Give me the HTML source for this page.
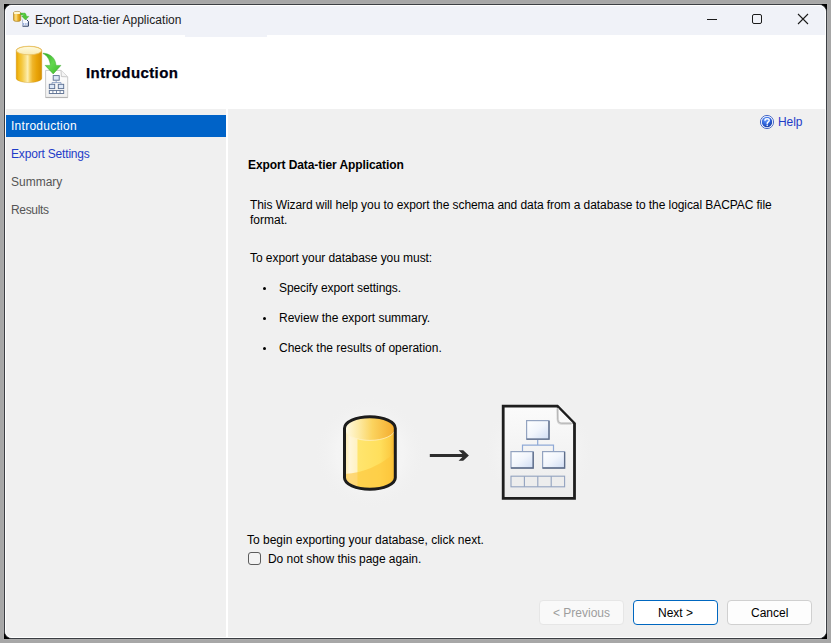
<!DOCTYPE html>
<html><head><meta charset="utf-8">
<style>
html,body{margin:0;padding:0;}
body{width:831px;height:643px;background:#a7a7a7;position:relative;overflow:hidden;font-family:"Liberation Sans",sans-serif;font-size:12px;color:#000;}
.a{position:absolute;}
.t{position:absolute;white-space:nowrap;line-height:14px;font-size:12px;}
#blk{left:4px;top:4px;width:823px;height:635px;background:#000;}
#win{left:4px;top:4px;width:823px;height:635px;box-sizing:border-box;border:1px solid #3b3e43;border-radius:8px;background:#f0f0f0;overflow:hidden;}
#inner{position:absolute;left:0;top:0;right:0;bottom:0;border:1px solid #fff;border-radius:7px;box-sizing:border-box;}
</style></head>
<body>
<div class="a" style="left:3px;top:3px;width:825px;height:637px;box-sizing:border-box;border:1px solid #acacac;"></div>
<div class="a" id="blk"></div>
<div class="a" id="win">
  <!-- coordinates inside #win are offset by 5px (4 + 1 border) -->
  <div class="a" style="left:0;top:0;width:821px;height:30px;background:#f0f2f8;"></div>
  <div class="a" style="left:0;top:30px;width:821px;height:74px;background:#fff;"></div>
  <div class="a" style="left:180px;top:30px;width:82px;height:2px;background:#f0f2f8;"></div>
  <div class="a" style="left:0;top:104px;width:221px;height:529px;background:#f0f0f0;"></div>
  <div class="a" style="left:221px;top:104px;width:2px;height:529px;background:#fff;"></div>
  <div class="a" style="left:223px;top:104px;width:598px;height:529px;background:#f0f0f0;"></div>
  <div class="a" style="left:0;top:110px;width:221px;height:22px;background:#0063c8;"></div>
  <div id="inner"></div>
</div>

<!-- title bar -->
<div class="t" style="left:35px;top:13px;color:#1b1b1b;letter-spacing:0.04px;">Export Data-tier Application</div>
<!-- window controls -->
<svg class="a" style="left:700px;top:8px" width="120" height="22" viewBox="0 0 120 22">
  <line x1="7" y1="11.5" x2="17" y2="11.5" stroke="#1b1b1b" stroke-width="1"/>
  <rect x="52.5" y="6.5" width="9" height="9" rx="1.5" fill="none" stroke="#1b1b1b" stroke-width="1"/>
  <path d="M98 6 L108 16 M108 6 L98 16" stroke="#1b1b1b" stroke-width="1.1"/>
</svg>


<!-- header icon -->
<svg class="a" style="left:10px;top:40px" width="64" height="62" viewBox="10 40 64 62">
  <defs>
    <linearGradient id="hCyl" x1="0" y1="0" x2="1" y2="0">
      <stop offset="0" stop-color="#e6a000"/>
      <stop offset="0.1" stop-color="#f2ba1c"/>
      <stop offset="0.22" stop-color="#f4c840"/>
      <stop offset="0.36" stop-color="#f9de80"/>
      <stop offset="0.45" stop-color="#fdefb2"/>
      <stop offset="0.53" stop-color="#f7d466"/>
      <stop offset="0.64" stop-color="#efb52a"/>
      <stop offset="0.8" stop-color="#e9a408"/>
      <stop offset="1" stop-color="#d89000"/>
    </linearGradient>
    <linearGradient id="hTop" x1="0" y1="0" x2="0" y2="1">
      <stop offset="0" stop-color="#fffbe0"/><stop offset="1" stop-color="#f8eab0"/>
    </linearGradient>
    <linearGradient id="hArrow" x1="0" y1="0" x2="1" y2="1">
      <stop offset="0" stop-color="#2faa22"/><stop offset="0.5" stop-color="#62d84e"/><stop offset="1" stop-color="#3cb82c"/>
    </linearGradient>
    <linearGradient id="hDoc" x1="0" y1="0" x2="0" y2="1">
      <stop offset="0" stop-color="#ffffff"/><stop offset="1" stop-color="#f0f0f0"/>
    </linearGradient>
  </defs>
  <!-- cylinder -->
  <path d="M16.2,50.6 A12.8,4.4 0 0 1 41.8,50.6 L41.8,78.2 A12.8,4.4 0 0 1 16.2,78.2 Z" fill="url(#hCyl)" stroke="#c8931a" stroke-width="0.6" stroke-opacity="0.6"/>
  <ellipse cx="29" cy="50.6" rx="12.6" ry="4.2" fill="url(#hTop)" stroke="#e8c060" stroke-width="0.8"/>
  <!-- document -->
  <path d="M45.6,70.4 L61,70.4 L67.7,76.8 L67.7,97.4 L45.6,97.4 Z" fill="url(#hDoc)" stroke="#c4c4c4" stroke-width="0.9"/>
  <path d="M45.6,97.6 H67.7" stroke="#a8a8a8" stroke-width="0.8"/>
  <path d="M61,70.8 L61.4,76.6 L67.3,76.8" fill="#f4f4f4" stroke="#bdbdbd" stroke-width="0.8"/>
  <!-- arrow -->
  <path d="M43,53.2 C49,53.4 55.5,57 56,65.4 L60.9,65.4 L53.2,73.9 L45.2,65.4 L50.4,65.4 C50,60 47,55.2 43,53.6 Z" fill="url(#hArrow)" stroke="#3aa82a" stroke-width="0.5"/>
  <!-- org chart -->
  <g stroke="#5a6e90" stroke-width="0.9" fill="#dde8f8">
    <rect x="53.2" y="75.6" width="6" height="4.6"/>
    <rect x="49.3" y="84.3" width="5.4" height="4.3"/>
    <rect x="58.3" y="84.3" width="5.4" height="4.3"/>
  </g>
  <path d="M56.2,80.2 V82.6 M52,84.3 V82.6 H61 V84.3" stroke="#7d94bc" stroke-width="0.8" fill="none"/>
  <rect x="49.3" y="90.6" width="14.4" height="2.9" fill="#ffffff" stroke="#5a6e90" stroke-width="0.9"/>
  <path d="M52.9,90.6 V93.5 M56.5,90.6 V93.5 M60.1,90.6 V93.5" stroke="#5a6e90" stroke-width="0.8"/>
</svg>
<!-- title icon -->
<svg class="a" style="left:12px;top:10px" width="20" height="20" viewBox="12 10 20 20">
  <defs>
    <linearGradient id="tCyl" x1="0" y1="0" x2="1" y2="0">
      <stop offset="0" stop-color="#e6a818"/><stop offset="0.35" stop-color="#fbe08a"/><stop offset="0.6" stop-color="#eeb428"/><stop offset="1" stop-color="#cc8a06"/>
    </linearGradient>
  </defs>
  <path d="M13.5,12.9 A3.6,1.5 0 0 1 20.7,12.9 L20.7,19.9 A3.6,1.5 0 0 1 13.5,19.9 Z" fill="url(#tCyl)" stroke="#a88232" stroke-width="0.7"/>
  <ellipse cx="17.1" cy="12.9" rx="3.3" ry="1.2" fill="#fff8d4"/>
  <path d="M22.6,19.6 H26.6 L28.4,21.4 V26.2 H22.6 Z" fill="#f8faff"/>
  <path d="M22.6,19.6 V26.2" stroke="#9aaac8" stroke-width="0.8"/>
  <path d="M22.6,26.2 H28.4 V21.4 L26.6,19.6" stroke="#27395e" stroke-width="1" fill="none"/>
  <path d="M23.2,23.5 H28 M23.2,24.6 H28" stroke="#5f84c8" stroke-width="0.8" stroke-dasharray="1 1.2"/>
  <path d="M20.6,13.1 L24.6,13.1 C25.6,13.3 26.2,14.6 26.4,16.3 L28.9,16.4 L25.4,19.9 L21.6,16 L23.6,16 C23.4,15.2 22.6,14.9 20.6,15 Z" fill="#4fc63a" stroke="#3aa82a" stroke-width="0.4"/>
  <path d="M22.4,14 H24.5" stroke="#8ae070" stroke-width="0.6"/>
</svg>
<!-- help icon -->
<svg class="a" style="left:758px;top:113px" width="18" height="18" viewBox="758 113 18 18">
  <defs>
    <radialGradient id="hlp" cx="0.4" cy="0.3" r="0.75">
      <stop offset="0" stop-color="#6aa0ff"/><stop offset="0.6" stop-color="#2a5fd8"/><stop offset="1" stop-color="#1a3a9a"/>
    </radialGradient>
  </defs>
  <circle cx="767" cy="122" r="6.6" fill="#f4f8ff" stroke="#3a5cc0" stroke-width="0.9"/>
  <circle cx="767" cy="122" r="5.2" fill="url(#hlp)"/>
  <path d="M765,120.2 C765,118.4 769.2,118.2 769.2,120.4 C769.2,121.8 767.2,122 767.2,123.6" stroke="#fff" stroke-width="1.4" fill="none" stroke-linecap="round"/>
  <circle cx="767.2" cy="125.3" r="0.8" fill="#fff"/>
</svg>
<!-- header -->
<div class="t" style="left:86px;top:64px;font-size:15px;line-height:18px;letter-spacing:0.4px;font-weight:bold;color:#000010;-webkit-text-stroke:0.25px #000010;">Introduction</div>

<!-- sidebar -->
<div class="t" style="left:11px;top:119px;color:#fff;letter-spacing:0.27px;">Introduction</div>
<div class="t" style="left:11px;top:147px;color:#1e3cc8;letter-spacing:-0.18px;">Export Settings</div>
<div class="t" style="left:11px;top:175px;color:#555;">Summary</div>
<div class="t" style="left:11px;top:203px;color:#555;letter-spacing:-0.33px;">Results</div>

<!-- content -->
<div class="t" style="left:778px;top:115px;color:#1e3cc8;letter-spacing:-0.1px;">Help</div>
<div class="t" style="left:248px;top:158px;font-weight:bold;letter-spacing:-0.09px;">Export Data-tier Application</div>
<div class="t" style="left:250px;top:198px;letter-spacing:-0.072px;">This Wizard will help you to export the schema and data from a database to the logical BACPAC file</div>
<div class="t" style="left:250px;top:213px;">format.</div>
<div class="t" style="left:250px;top:251px;letter-spacing:-0.06px;">To export your database you must:</div>
<div class="a" style="left:263px;top:287px;width:3px;height:3px;border-radius:50%;background:#000;"></div>
<div class="t" style="left:279px;top:281px;letter-spacing:-0.087px;">Specify export settings.</div>
<div class="a" style="left:263px;top:317px;width:3px;height:3px;border-radius:50%;background:#000;"></div>
<div class="t" style="left:279px;top:311px;">Review the export summary.</div>
<div class="a" style="left:263px;top:347px;width:3px;height:3px;border-radius:50%;background:#000;"></div>
<div class="t" style="left:279px;top:341px;">Check the results of operation.</div>


<!-- illustration -->
<svg class="a" style="left:300px;top:380px" width="300" height="140" viewBox="300 380 300 140">
  <defs>
    <radialGradient id="glow" cx="0.5" cy="0.5" r="0.5">
      <stop offset="0" stop-color="#f6f6f6"/><stop offset="0.6" stop-color="#f4f4f4"/><stop offset="1" stop-color="#f0f0f0" stop-opacity="0"/>
    </radialGradient>
    <linearGradient id="cylBody" x1="0" y1="0" x2="1" y2="0">
      <stop offset="0" stop-color="#fbe8a8"/>
      <stop offset="0.1" stop-color="#fff6da"/>
      <stop offset="0.24" stop-color="#fff2c4"/>
      <stop offset="0.27" stop-color="#ffe56e"/>
      <stop offset="0.7" stop-color="#ffdf5c"/>
      <stop offset="0.9" stop-color="#fccc44"/>
      <stop offset="1" stop-color="#f2ae2a"/>
    </linearGradient>
    <linearGradient id="cylTop" x1="0" y1="0" x2="1" y2="0">
      <stop offset="0" stop-color="#fffbe8"/>
      <stop offset="0.28" stop-color="#fdeaa4"/>
      <stop offset="0.55" stop-color="#fbd35e"/>
      <stop offset="1" stop-color="#f4aa2c"/>
    </linearGradient>
    <linearGradient id="docFill" x1="0" y1="0" x2="0" y2="1">
      <stop offset="0" stop-color="#fbfbfb"/><stop offset="1" stop-color="#ebebeb"/>
    </linearGradient>
    <linearGradient id="boxFill" x1="0" y1="0" x2="1" y2="1">
      <stop offset="0" stop-color="#ffffff"/><stop offset="0.5" stop-color="#f1f5fc"/><stop offset="1" stop-color="#cfdcf3"/>
    </linearGradient>
  </defs>
  <circle cx="370" cy="453" r="56" fill="url(#glow)"/>
  <circle cx="539" cy="452" r="56" fill="url(#glow)"/>
  <!-- cylinder -->
  <path d="M344.5,428.3 A25.4,11.5 0 0 1 395.3,428.3 L395.3,477.8 A25.4,11.5 0 0 1 344.5,477.8 Z" fill="url(#cylBody)"/>
  <path d="M344.5,474 Q374,472 395.3,452 L395.3,477.8 A25.4,11.5 0 0 1 344.5,477.8 Z" fill="#fdc43a" opacity="0.6"/>
  <ellipse cx="369.9" cy="428.6" rx="25.4" ry="11.8" fill="url(#cylTop)" stroke="#fff2cc" stroke-width="0.9" stroke-opacity="0.8"/>
  <path d="M344.5,428.3 A25.4,11.5 0 0 1 395.3,428.3 L395.3,477.8 A25.4,11.5 0 0 1 344.5,477.8 Z" fill="none" stroke="#1c1c1c" stroke-width="3"/>
  <!-- arrow -->
  <path d="M458.6,450.2 L463.2,450.2 L468.9,455.5 L463.2,460.8 L458.6,460.8 L462.4,457 L429.8,457 L429.8,454 L462.4,454 Z" fill="#2d2d2d"/>
  <!-- document -->
  <path d="M503.2,406.2 L557.4,406.2 L574.5,423.6 L574.5,498.4 L503.2,498.4 Z" fill="url(#docFill)" stroke="#1e1e1e" stroke-width="2.8" stroke-linejoin="miter"/>
  <path d="M557.4,407.6 L572.9,423.2 L561,423.2 Q557.6,423 557.6,419.5 Z" fill="#fafafa"/>
  <path d="M557.6,408.5 L557.8,419.5 Q558,423.2 561.2,423.5 L571.5,423.5" fill="none" stroke="#d4d4d4" stroke-width="2.4"/>
  <path d="M557.4,408 L557.6,419.5 Q557.8,423 561.2,423.3 L571.8,423.3" fill="none" stroke="#b4b4b4" stroke-width="0.9"/>
  <!-- org chart -->
  <g stroke="#8fa9d6" stroke-width="1.2" fill="none">
    <path d="M537.7,439.5 V445.2 M522.5,451 V445.2 H553.5 V451"/>
  </g>
  <g stroke="#93a3c0" stroke-width="1.2" fill="url(#boxFill)">
    <rect x="526.6" y="420.6" width="22.4" height="18.6"/>
    <rect x="511" y="451.6" width="22.2" height="16.4"/>
    <rect x="542.6" y="451.6" width="22" height="16.4"/>
  </g>
  <g stroke="#5d6c88" stroke-width="1.3" fill="none">
    <path d="M549,421 V439.2 H526.6"/>
    <path d="M533.2,452 V468 H511"/>
    <path d="M564.6,452 V468 H542.6"/>
  </g>
  <g stroke="#92a2bf" stroke-width="1.1" fill="#ededed">
    <rect x="511" y="476.2" width="53.6" height="10.6"/>
    <path d="M524.4,476.2 V486.8 M537.8,476.2 V486.8 M551.2,476.2 V486.8"/>
  </g>
</svg>
<div class="t" style="left:247px;top:533px;">To begin exporting your database, click next.</div>
<div class="a" style="left:248px;top:552px;width:13px;height:13px;box-sizing:border-box;border:1px solid #5c5c5c;border-radius:3px;background:#f3f3f3;"></div>
<div class="t" style="left:268px;top:552px;letter-spacing:-0.055px;">Do not show this page again.</div>

<!-- buttons -->
<div class="a" style="left:539px;top:600px;width:85px;height:25px;box-sizing:border-box;border:1px solid #e6e6e6;border-radius:4px;background:#f9f9f9;"></div>
<div class="t" style="left:553px;top:606px;color:#9d9d9d;">&lt; Previous</div>
<div class="a" style="left:633px;top:600px;width:85px;height:25px;box-sizing:border-box;border:1.5px solid #0067c0;border-radius:4px;background:#fff;"></div>
<div class="t" style="left:658px;top:606px;">Next &gt;</div>
<div class="a" style="left:727px;top:600px;width:85px;height:25px;box-sizing:border-box;border:1px solid #d0d0d0;border-radius:4px;background:#fdfdfd;"></div>
<div class="t" style="left:751px;top:606px;">Cancel</div>

</body></html>
